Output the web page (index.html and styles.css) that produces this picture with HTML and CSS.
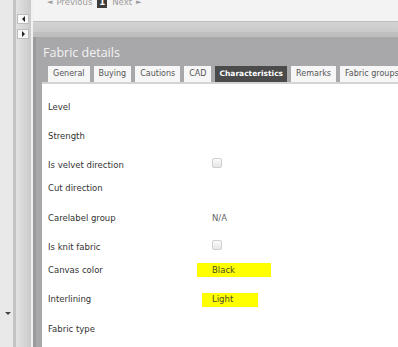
FILE: index.html
```html
<!DOCTYPE html>
<html>
<head>
<meta charset="utf-8">
<link rel="stylesheet" href="styles.css">
</head>
<body>
<div class="app">
  <div class="rail"><span class="down-arrow"></span></div>
  <div class="rail-sep"></div>
  <div class="scroller">
    <div class="nav-btn"><span class="tri-left"></span></div>
    <div class="nav-btn"><span class="tri-right"></span></div>
  </div>
  <div class="gutter"></div>
  <div class="main">
    <div class="pager-bar">
      <div class="pager">
        <span class="pg-arrow">&#9668;</span><span>Previous</span><span class="pg-num">1</span><span>Next</span><span class="pg-arrow">&#9658;</span>
      </div>
    </div>
    <div class="header-grad"></div>
    <div class="panel">
      <div class="title">Fabric details</div>
      <div class="tabs">
        <div class="tab">General</div>
        <div class="tab">Buying</div>
        <div class="tab">Cautions</div>
        <div class="tab">CAD</div>
        <div class="tab active">Characteristics</div>
        <div class="tab">Remarks</div>
        <div class="tab">Fabric groups</div>
      </div>
      <div class="tab-line"></div>
      <div class="content">
        <div class="form">
          <div class="lbl">Level</div><div class="val"></div>
          <div class="lbl">Strength</div><div class="val"></div>
          <div class="lbl">Is velvet direction</div><div class="val"><span class="check"></span></div>
          <div class="lbl">Cut direction</div><div class="val"></div>
          <div class="lbl">Carelabel group</div><div class="val na">N/A</div>
          <div class="lbl">Is knit fabric</div><div class="val"><span class="check"></span></div>
          <div class="lbl">Canvas color</div><div class="val"><span class="hl hl-black">Black</span></div>
          <div class="lbl">Interlining</div><div class="val"><span class="hl hl-light">Light</span></div>
          <div class="lbl">Fabric type</div><div class="val"></div>
        </div>
      </div>
    </div>
  </div>
</div>
</body>
</html>
```

FILE: styles.css
```css
* { box-sizing: border-box; }
html, body { margin: 0; padding: 0; }
body {
  width: 398px;
  height: 347px;
  overflow: hidden;
  background: #ffffff;
  font-family: "DejaVu Sans", Verdana, sans-serif;
}
.app {
  display: flex;
  height: 347px;
  overflow: hidden;
}
.rail {
  width: 13px;
  flex: none;
  background: #e9e9e9;
  display: flex;
  flex-direction: column;
  justify-content: flex-end;
  align-items: center;
  padding-bottom: 32px;
  padding-left: 2px;
}
.down-arrow {
  width: 0;
  height: 0;
  border-left: 3px solid transparent;
  border-right: 3px solid transparent;
  border-top: 3px solid #444;
}
.rail-sep {
  width: 3px;
  flex: none;
  background: #c3c3c3;
}
.scroller {
  width: 15px;
  flex: none;
  background: linear-gradient(to right, #e2e2e2, #d9d9d9 40%, #cacaca);
  padding-top: 14px;
  padding-left: 1px;
  display: flex;
  flex-direction: column;
  gap: 5px;
}
.nav-btn {
  width: 12px;
  height: 10px;
  background: #f8f8f8;
  border: 1px solid #bcbcbc;
  display: flex;
  align-items: center;
  justify-content: center;
}
.tri-left {
  width: 0; height: 0;
  border-top: 3px solid transparent;
  border-bottom: 3px solid transparent;
  border-right: 3px solid #222;
}
.tri-right {
  width: 0; height: 0;
  border-top: 3px solid transparent;
  border-bottom: 3px solid transparent;
  border-left: 3px solid #222;
}
.gutter {
  width: 2px;
  flex: none;
  background: #f1f1f1;
}
.main {
  flex: 1;
  display: flex;
  flex-direction: column;
  overflow: hidden;
  min-width: 0;
}
.pager-bar {
  flex: none;
  height: 21px;
  background: #f3f3f3;
  padding-left: 14px;
  overflow: hidden;
}
.pager {
  margin-top: -4px;
  display: flex;
  align-items: center;
  gap: 4px;
  font-size: 8.5px;
  line-height: 12px;
  color: #9c9c9c;
  white-space: nowrap;
}
.pg-arrow { font-size: 7px; }
.pg-num {
  background: #3d3d3d;
  color: #fff;
  font-weight: bold;
  padding: 0 2px;
  margin: 0 1px;
}
.header-grad {
  flex: none;
  height: 16px;
  border-top: 1px solid #bebebe;
  background: linear-gradient(to bottom, #d3d3d3, #cacaca 65%, #c0c0c0 70%, #bdbdbd);
}
.panel {
  flex: 1;
  min-height: 0;
  overflow: hidden;
  background: #a8a8aa;
  border-left: 3px solid #9b9b9b;
  padding-left: 6px;
  display: flex;
  flex-direction: column;
}
.title {
  flex: none;
  height: 29px;
  padding-top: 9px;
  padding-left: 1px;
  font-family: "Open Sans", sans-serif;
  font-size: 12.5px;
  line-height: 14px;
  color: #f3f3f3;
}
.tabs {
  flex: none;
  display: flex;
  gap: 4px;
  padding-left: 6px;
  white-space: nowrap;
}
.tab {
  height: 16px;
  line-height: 16px;
  padding: 0 5px;
  font-size: 8px;
  color: #555;
  background: #f6f6f6;
  flex: none;
}
.tab.active {
  background: #4b4b4b;
  color: #fff;
  font-weight: bold;
  font-size: 7.5px;
  padding: 0 4px;
}
.tab-line {
  flex: none;
  height: 2px;
  background: #d4d4d4;
}
.content {
  flex: 1;
  background: #fff;
  padding-top: 17px;
  padding-left: 6px;
}
.form {
  display: grid;
  grid-template-columns: 164px 1fr;
  grid-template-rows: 29px 29px 23px 30px 29px 23px 29px 30px 29px;
  font-size: 8.5px;
  line-height: 12px;
  color: #333;
}
.lbl { white-space: nowrap; }
.val { color: #555; }
.check {
  display: inline-block;
  width: 10px;
  height: 10px;
  border: 1px solid #cfcfcf;
  border-radius: 2px;
  background: linear-gradient(#fbfbfb, #e6e6e6);
  margin-top: -1px;
}
.na { color: #666; }
.hl {
  display: inline-block;
  background: #ffff00;
  color: #4a4a2a;
  line-height: 11px;
}
.hl-black {
  margin-left: -15px;
  padding: 2px 36px 1px 15px;
  margin-top: -3px;
}
.hl-light {
  margin-left: -10px;
  padding: 1px 25px 2px 10px;
  margin-top: -4px;
}
```
